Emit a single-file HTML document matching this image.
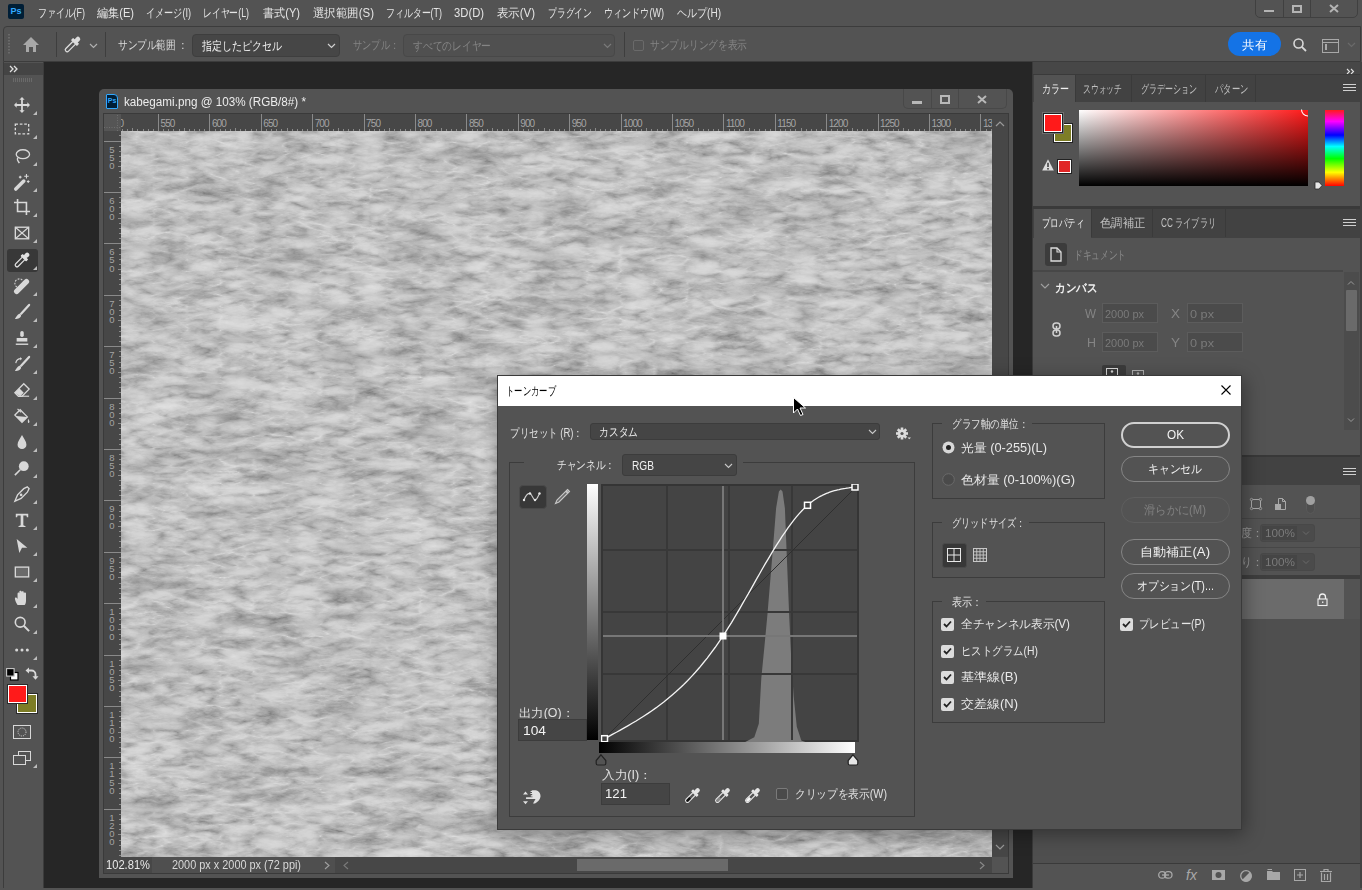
<!DOCTYPE html>
<html><head><meta charset="utf-8">
<style>
*{margin:0;padding:0;box-sizing:border-box}
html,body{width:1362px;height:890px;overflow:hidden;background:#282828;font-family:"Liberation Sans",sans-serif;font-size:12px;color:#dcdcdc}
.a{position:absolute}
.t{position:absolute;white-space:nowrap;line-height:16px;height:16px;transform-origin:0 50%}
svg{position:absolute;overflow:visible}
</style></head><body>
<div class="a" style="left:0px;top:0px;width:1362px;height:62px;background:#535353"></div>
<div class="a" style="left:8px;top:4px;width:16px;height:15px;background:#001e36;border-radius:2px;color:#31a8ff;font:bold 9px/15px 'Liberation Sans',sans-serif;text-align:center">Ps</div>
<div class="t" style="left:38px;top:4.5px;font-size:12px;color:#e4e4e4;--w:47;">ファイル(F)</div>
<div class="t" style="left:97px;top:4.5px;font-size:12px;color:#e4e4e4;--w:37;">編集(E)</div>
<div class="t" style="left:146px;top:4.5px;font-size:12px;color:#e4e4e4;--w:45;">イメージ(I)</div>
<div class="t" style="left:203px;top:4.5px;font-size:12px;color:#e4e4e4;--w:46;">レイヤー(L)</div>
<div class="t" style="left:263px;top:4.5px;font-size:12px;color:#e4e4e4;--w:37;">書式(Y)</div>
<div class="t" style="left:313px;top:4.5px;font-size:12px;color:#e4e4e4;--w:61;">選択範囲(S)</div>
<div class="t" style="left:386px;top:4.5px;font-size:12px;color:#e4e4e4;--w:56;">フィルター(T)</div>
<div class="t" style="left:454px;top:4.5px;font-size:12px;color:#e4e4e4;--w:30;">3D(D)</div>
<div class="t" style="left:497px;top:4.5px;font-size:12px;color:#e4e4e4;--w:38;">表示(V)</div>
<div class="t" style="left:548px;top:4.5px;font-size:12px;color:#e4e4e4;--w:44;">プラグイン</div>
<div class="t" style="left:604px;top:4.5px;font-size:12px;color:#e4e4e4;--w:60;">ウィンドウ(W)</div>
<div class="t" style="left:677px;top:4.5px;font-size:12px;color:#e4e4e4;--w:44;">ヘルプ(H)</div>
<div class="a" style="left:1255px;top:-1px;width:103px;height:19px;border:1px solid #404040;border-radius:0 0 5px 5px"></div>
<div class="a" style="left:1283px;top:0px;width:1px;height:17px;background:#404040"></div>
<div class="a" style="left:1310px;top:0px;width:1px;height:17px;background:#404040"></div>
<div class="a" style="left:1264px;top:10px;width:10px;height:2px;background:#b4b4b4"></div>
<div class="a" style="left:1292px;top:5px;width:10px;height:8px;border:2px solid #b4b4b4"></div>
<svg style="left:1329px;top:4px;" width="10" height="9" viewBox="0 0 10 9"><path d="M1 1L9 8M9 1L1 8" stroke="#b4b4b4" stroke-width="2"/></svg>
<div class="a" style="left:3px;top:26px;width:1358px;height:36px;background:#535353;border:1px solid #3c3c3c;border-radius:4px 0 0 0"></div>
<svg style="left:8px;top:34px;" width="3" height="20" viewBox="0 0 3 20"><rect x="0" y="0" width="2" height="1.5" fill="#6a6a6a"/><rect x="0" y="3" width="2" height="1.5" fill="#6a6a6a"/><rect x="0" y="6" width="2" height="1.5" fill="#6a6a6a"/><rect x="0" y="9" width="2" height="1.5" fill="#6a6a6a"/><rect x="0" y="12" width="2" height="1.5" fill="#6a6a6a"/><rect x="0" y="15" width="2" height="1.5" fill="#6a6a6a"/><rect x="0" y="18" width="2" height="1.5" fill="#6a6a6a"/></svg>
<svg style="left:23px;top:37px;" width="16" height="16" viewBox="0 0 16 16"><path d="M8 0L16 8H13V15H10V10H6V15H3V8H0Z" fill="#a8a8a8"/></svg>
<div class="a" style="left:56px;top:32px;width:1px;height:25px;background:#3e3e3e"></div>
<svg style="left:64px;top:36px;" width="17" height="17" viewBox="0 0 17 17"><g transform="translate(8.5 8.5) rotate(45) scale(1.0) translate(0 -10)"><rect x="-2.3" y="0" width="4.6" height="6" rx="2.3" fill="#dcdcdc"/><rect x="-3.8" y="5" width="7.6" height="2.6" rx="0.8" fill="#dcdcdc"/><path d="M-1.9 7.6V17.5A1.9 1.9 0 0 0 1.9 17.5V7.6" stroke="#dcdcdc" stroke-width="1.3" fill="#535353"/><rect x="-4.2" y="5" width="8.4" height="3" rx="0.8" fill="#dcdcdc"/></g></svg>
<svg style="left:89px;top:43px;" width="9" height="6" viewBox="0 0 9 6"><path d="M1 1L4.5 4.5L8 1" stroke="#b0b0b0" fill="none" stroke-width="1.2"/></svg>
<div class="a" style="left:105px;top:32px;width:1px;height:25px;background:#3e3e3e"></div>
<div class="t" style="left:118px;top:37px;font-size:12px;color:#dcdcdc;--w:70;">サンプル範囲 ：</div>
<div class="a" style="left:192px;top:34px;width:148px;height:23px;background:#464646;border:1px solid #3e3e3e;border-radius:4px"></div>
<div class="t" style="left:202px;top:37.5px;font-size:12px;color:#f0f0f0;--w:80;">指定したピクセル</div>
<svg style="left:327px;top:43px;" width="9" height="6" viewBox="0 0 9 6"><path d="M1 1L4.5 4.5L8 1" stroke="#d0d0d0" fill="none" stroke-width="1.2"/></svg>
<div class="t" style="left:353px;top:37px;font-size:12px;color:#858585;--w:46;">サンプル：</div>
<div class="a" style="left:403px;top:34px;width:212px;height:23px;background:#505050;border:1px solid #484848;border-radius:4px"></div>
<div class="t" style="left:413px;top:37.5px;font-size:12px;color:#858585;--w:78;">すべてのレイヤー</div>
<svg style="left:603px;top:43px;" width="9" height="6" viewBox="0 0 9 6"><path d="M1 1L4.5 4.5L8 1" stroke="#7a7a7a" fill="none" stroke-width="1.2"/></svg>
<div class="a" style="left:624px;top:32px;width:1px;height:25px;background:#3e3e3e"></div>
<div class="a" style="left:633px;top:40px;width:11px;height:11px;border:1px solid #6a6a6a;border-radius:2px"></div>
<div class="t" style="left:650px;top:37px;font-size:12px;color:#858585;--w:97;">サンプルリングを表示</div>
<div class="a" style="left:1228px;top:32px;width:53px;height:24px;background:#1473e6;border-radius:12px"></div>
<div class="t" style="left:1242px;top:36.5px;font-size:12px;color:#ffffff;--w:25;">共有</div>
<svg style="left:1293px;top:38px;" width="14" height="14" viewBox="0 0 14 14"><circle cx="5.5" cy="5.5" r="4.5" stroke="#d8d8d8" stroke-width="1.6" fill="none"/><path d="M8.8 8.8L13 13" stroke="#d8d8d8" stroke-width="1.8"/></svg>
<svg style="left:1322px;top:39px;" width="17" height="14" viewBox="0 0 17 14"><rect x="0.5" y="0.5" width="16" height="13" stroke="#a8a8a8" fill="none"/><path d="M0.5 3.5H16.5" stroke="#a8a8a8"/><rect x="3" y="5" width="2" height="6" fill="#a8a8a8"/></svg>
<svg style="left:1347px;top:42px;" width="9" height="6" viewBox="0 0 9 6"><path d="M1 1L4.5 4.5L8 1" stroke="#6a6a6a" fill="none" stroke-width="1.2"/></svg>
<div class="a" style="left:0px;top:62px;width:3px;height:828px;background:#535353"></div>
<div class="a" style="left:3px;top:62px;width:41px;height:828px;background:#535353;border-left:1px solid #3c3c3c;border-right:1px solid #3c3c3c"></div>
<div class="a" style="left:4px;top:63px;width:39px;height:12px;background:#444444"></div>
<svg style="left:9px;top:65px;" width="10" height="8" viewBox="0 0 10 8"><path d="M1 1L4 4L1 7M5 1L8 4L5 7" stroke="#e0e0e0" fill="none" stroke-width="1.3"/></svg>
<svg style="left:13px;top:78px;" width="20" height="5" viewBox="0 0 20 5"><rect x="0" y="0" width="1" height="4" fill="#6a6a6a"/><rect x="2" y="0" width="1" height="4" fill="#6a6a6a"/><rect x="4" y="0" width="1" height="4" fill="#6a6a6a"/><rect x="6" y="0" width="1" height="4" fill="#6a6a6a"/><rect x="8" y="0" width="1" height="4" fill="#6a6a6a"/><rect x="10" y="0" width="1" height="4" fill="#6a6a6a"/><rect x="12" y="0" width="1" height="4" fill="#6a6a6a"/><rect x="14" y="0" width="1" height="4" fill="#6a6a6a"/><rect x="16" y="0" width="1" height="4" fill="#6a6a6a"/><rect x="18" y="0" width="1" height="4" fill="#6a6a6a"/></svg>
<svg style="left:13.5px;top:97px" width="16" height="16" viewBox="0 0 18 18"><path d="M9 0L12 3H10V8H15V6L18 9L15 12V10H10V15H12L9 18L6 15H8V10H3V12L0 9L3 6V8H8V3H6Z" fill="#d8d8d8"/></svg>
<svg style="left:33px;top:111px;" width="4" height="4" viewBox="0 0 4 4"><path d="M4 0V4H0Z" fill="#bdbdbd"/></svg>
<svg style="left:13.5px;top:121px" width="16" height="16" viewBox="0 0 18 18"><rect x="1.5" y="3.5" width="15" height="11" stroke="#d8d8d8" stroke-width="1.5" stroke-dasharray="3 2" fill="none"/></svg>
<svg style="left:33px;top:135px;" width="4" height="4" viewBox="0 0 4 4"><path d="M4 0V4H0Z" fill="#bdbdbd"/></svg>
<svg style="left:13.5px;top:148px" width="16" height="16" viewBox="0 0 18 18"><ellipse cx="10" cy="7" rx="7.5" ry="5" stroke="#d8d8d8" stroke-width="1.5" fill="none"/><path d="M4 11C3 14 5 15 6 17" stroke="#d8d8d8" stroke-width="1.5" fill="none"/></svg>
<svg style="left:33px;top:162px;" width="4" height="4" viewBox="0 0 4 4"><path d="M4 0V4H0Z" fill="#bdbdbd"/></svg>
<svg style="left:13.5px;top:174px" width="16" height="16" viewBox="0 0 18 18"><path d="M2 17L11 8" stroke="#d8d8d8" stroke-width="4" stroke-linecap="round"/><path d="M14 0V5M11.5 2.5H16.5M7 2V5M5.5 3.5H8.5M16 7V10M14.5 8.5H17.5" stroke="#d8d8d8" stroke-width="1.2"/></svg>
<svg style="left:33px;top:188px;" width="4" height="4" viewBox="0 0 4 4"><path d="M4 0V4H0Z" fill="#bdbdbd"/></svg>
<svg style="left:13.5px;top:199px" width="16" height="16" viewBox="0 0 18 18"><path d="M4 0V14H18M0 4H14V18" stroke="#d8d8d8" stroke-width="1.8" fill="none"/></svg>
<svg style="left:33px;top:213px;" width="4" height="4" viewBox="0 0 4 4"><path d="M4 0V4H0Z" fill="#bdbdbd"/></svg>
<svg style="left:13.5px;top:225px" width="16" height="16" viewBox="0 0 18 18"><rect x="1.5" y="2.5" width="15" height="13" stroke="#d8d8d8" stroke-width="1.5" fill="none"/><path d="M1.5 2.5L16.5 15.5M16.5 2.5L1.5 15.5" stroke="#d8d8d8" stroke-width="1.3"/></svg>
<svg style="left:33px;top:239px;" width="4" height="4" viewBox="0 0 4 4"><path d="M4 0V4H0Z" fill="#bdbdbd"/></svg>
<div class="a" style="left:7px;top:249px;width:31px;height:23px;background:#383838;border-radius:3px"></div>
<svg style="left:13.5px;top:252px" width="16" height="16" viewBox="0 0 18 18"><g transform="scale(1.06)"><g transform="translate(8.5 8.5) rotate(45) scale(1.0) translate(0 -10)"><rect x="-2.3" y="0" width="4.6" height="6" rx="2.3" fill="#e0e0e0"/><rect x="-3.8" y="5" width="7.6" height="2.6" rx="0.8" fill="#e0e0e0"/><path d="M-1.9 7.6V17.5A1.9 1.9 0 0 0 1.9 17.5V7.6" stroke="#e0e0e0" stroke-width="1.3" fill="#383838"/><rect x="-4.2" y="5" width="8.4" height="3" rx="0.8" fill="#e0e0e0"/></g></g></svg>
<svg style="left:33px;top:266px;" width="4" height="4" viewBox="0 0 4 4"><path d="M4 0V4H0Z" fill="#bdbdbd"/></svg>
<svg style="left:13.5px;top:278px" width="16" height="16" viewBox="0 0 18 18"><path d="M3 15L14 4" stroke="#d8d8d8" stroke-width="6" stroke-linecap="round"/><circle cx="6" cy="6" r="5" stroke="#d8d8d8" stroke-width="1.2" stroke-dasharray="2 1.5" fill="none"/></svg>
<svg style="left:33px;top:292px;" width="4" height="4" viewBox="0 0 4 4"><path d="M4 0V4H0Z" fill="#bdbdbd"/></svg>
<svg style="left:13.5px;top:304px" width="16" height="16" viewBox="0 0 18 18"><path d="M17 1L8 11" stroke="#d8d8d8" stroke-width="2.5" stroke-linecap="round"/><path d="M7 11C4 11 3 14 1 17C5 17 8 15 8 13Z" fill="#d8d8d8"/></svg>
<svg style="left:33px;top:318px;" width="4" height="4" viewBox="0 0 4 4"><path d="M4 0V4H0Z" fill="#bdbdbd"/></svg>
<svg style="left:13.5px;top:330px" width="16" height="16" viewBox="0 0 18 18"><rect x="7" y="1" width="4" height="7" rx="2" fill="#d8d8d8"/><path d="M3 9H15V13H3Z" fill="#d8d8d8"/><path d="M2 16H16" stroke="#d8d8d8" stroke-width="1.6"/></svg>
<svg style="left:33px;top:344px;" width="4" height="4" viewBox="0 0 4 4"><path d="M4 0V4H0Z" fill="#bdbdbd"/></svg>
<svg style="left:13.5px;top:356px" width="16" height="16" viewBox="0 0 18 18"><path d="M17 1L8 11" stroke="#d8d8d8" stroke-width="2.5" stroke-linecap="round"/><path d="M7 11C4 11 3 14 1 17C5 17 8 15 8 13Z" fill="#d8d8d8"/><path d="M2 8A6 6 0 0 1 8 3" stroke="#d8d8d8" stroke-width="1.3" fill="none"/><path d="M7 1L9 3L7 5" fill="#d8d8d8"/></svg>
<svg style="left:33px;top:370px;" width="4" height="4" viewBox="0 0 4 4"><path d="M4 0V4H0Z" fill="#bdbdbd"/></svg>
<svg style="left:13.5px;top:382px" width="16" height="16" viewBox="0 0 18 18"><path d="M11 2L17 8L9 16H5L1 12Z" fill="none" stroke="#d8d8d8" stroke-width="1.5"/><path d="M1 12L6 7L11 12L7 16" fill="#d8d8d8"/><path d="M9 16H17" stroke="#d8d8d8" stroke-width="1.3"/></svg>
<svg style="left:33px;top:396px;" width="4" height="4" viewBox="0 0 4 4"><path d="M4 0V4H0Z" fill="#bdbdbd"/></svg>
<svg style="left:13.5px;top:408px" width="16" height="16" viewBox="0 0 18 18"><path d="M7 2L15 10L9 16L1 8Z" stroke="#d8d8d8" stroke-width="1.5" fill="none"/><path d="M2 9L15 10L9 16Z" fill="#d8d8d8"/><path d="M16 12C17 14 18 15 17 16.5C16 17.5 15 16 16 12Z" fill="#d8d8d8"/><path d="M4 1L8 5" stroke="#d8d8d8" stroke-width="1.3"/></svg>
<svg style="left:33px;top:422px;" width="4" height="4" viewBox="0 0 4 4"><path d="M4 0V4H0Z" fill="#bdbdbd"/></svg>
<svg style="left:13.5px;top:434px" width="16" height="16" viewBox="0 0 18 18"><path d="M9 1C11 5 14 8 14 12A5 5 0 0 1 4 12C4 8 7 5 9 1Z" fill="#d8d8d8"/></svg>
<svg style="left:33px;top:448px;" width="4" height="4" viewBox="0 0 4 4"><path d="M4 0V4H0Z" fill="#bdbdbd"/></svg>
<svg style="left:13.5px;top:460px" width="16" height="16" viewBox="0 0 18 18"><circle cx="11" cy="7" r="5.5" fill="#d8d8d8"/><path d="M7 11L1 17" stroke="#d8d8d8" stroke-width="1.8"/></svg>
<svg style="left:33px;top:474px;" width="4" height="4" viewBox="0 0 4 4"><path d="M4 0V4H0Z" fill="#bdbdbd"/></svg>
<svg style="left:13.5px;top:486px" width="16" height="16" viewBox="0 0 18 18"><path d="M15 1L17 3L15 7L8 14L1 17L4 10L11 3Z" stroke="#d8d8d8" stroke-width="1.5" fill="none"/><circle cx="8" cy="10" r="1.5" fill="#d8d8d8"/></svg>
<svg style="left:33px;top:500px;" width="4" height="4" viewBox="0 0 4 4"><path d="M4 0V4H0Z" fill="#bdbdbd"/></svg>
<svg style="left:13.5px;top:512px" width="16" height="16" viewBox="0 0 18 18"><path d="M2 2H16V6H14.5L14 4H10.5V15L13 16V17H5V16L7.5 15V4H4L3.5 6H2Z" fill="#d8d8d8"/></svg>
<svg style="left:33px;top:526px;" width="4" height="4" viewBox="0 0 4 4"><path d="M4 0V4H0Z" fill="#bdbdbd"/></svg>
<svg style="left:13.5px;top:538px" width="16" height="16" viewBox="0 0 18 18"><path d="M3 1L15 11H9L6 17Z" fill="#d8d8d8"/></svg>
<svg style="left:33px;top:552px;" width="4" height="4" viewBox="0 0 4 4"><path d="M4 0V4H0Z" fill="#bdbdbd"/></svg>
<svg style="left:13.5px;top:564px" width="16" height="16" viewBox="0 0 18 18"><rect x="1.5" y="3.5" width="15" height="11" stroke="#d8d8d8" stroke-width="1.5" fill="#6a6a6a"/></svg>
<svg style="left:33px;top:578px;" width="4" height="4" viewBox="0 0 4 4"><path d="M4 0V4H0Z" fill="#bdbdbd"/></svg>
<svg style="left:13.5px;top:590px" width="16" height="16" viewBox="0 0 18 18"><path d="M4 17C2 14 1 11 1 9C1 8 3 8 4 10V4C4 2.5 6 2.5 6 4V8V2C6 0.5 8.5 0.5 8.5 2V8V2.5C8.5 1 11 1 11 2.5V8V4C11 2.5 13.5 2.5 13.5 4V12C13.5 14 13 16 12 17Z" fill="#d8d8d8"/></svg>
<svg style="left:33px;top:604px;" width="4" height="4" viewBox="0 0 4 4"><path d="M4 0V4H0Z" fill="#bdbdbd"/></svg>
<svg style="left:13.5px;top:616px" width="16" height="16" viewBox="0 0 18 18"><circle cx="7" cy="7" r="5.5" stroke="#d8d8d8" stroke-width="1.8" fill="none"/><path d="M11 11L17 17" stroke="#d8d8d8" stroke-width="2.2"/></svg>
<svg style="left:33px;top:630px;" width="4" height="4" viewBox="0 0 4 4"><path d="M4 0V4H0Z" fill="#bdbdbd"/></svg>
<svg style="left:13.5px;top:642px" width="16" height="16" viewBox="0 0 18 18"><circle cx="3" cy="9" r="1.7" fill="#d8d8d8"/><circle cx="9" cy="9" r="1.7" fill="#d8d8d8"/><circle cx="15" cy="9" r="1.7" fill="#d8d8d8"/></svg>
<svg style="left:33px;top:656px;" width="4" height="4" viewBox="0 0 4 4"><path d="M4 0V4H0Z" fill="#bdbdbd"/></svg>
<svg style="left:6px;top:668px;" width="13" height="13" viewBox="0 0 13 13"><rect x="4.5" y="4.5" width="7.5" height="7.5" fill="#fff" stroke="#000" stroke-width="1.2"/><rect x="2.5" y="6.5" width="1" height="1" fill="#fff"/><rect x="0.6" y="0.6" width="7.5" height="7.5" fill="#000" stroke="#c8c8c8" stroke-width="1.1"/></svg>
<svg style="left:25px;top:667px;" width="13" height="13" viewBox="0 0 13 13"><path d="M3 3.5H6.5A4 4 0 0 1 10.5 7.5V10" stroke="#d8d8d8" stroke-width="1.8" fill="none"/><path d="M0.5 3.5L4 0.5V6.5Z M10.5 12.8L7.5 9.3H13.5Z" fill="#d8d8d8"/></svg>
<div class="a" style="left:17px;top:694px;width:20px;height:19px;background:#7d7d26;border:1.5px solid #fff;outline:1px solid #2a2a2a"></div>
<div class="a" style="left:8px;top:685px;width:19px;height:18px;background:#ff1a1a;border:1.5px solid #fff;outline:1px solid #2a2a2a"></div>
<svg style="left:13px;top:725px;" width="18" height="14" viewBox="0 0 18 14"><rect x="0.5" y="0.5" width="17" height="13" stroke="#d8d8d8" fill="none"/><circle cx="9" cy="7" r="4" stroke="#d8d8d8" stroke-dasharray="1 1" fill="none"/></svg>
<svg style="left:13px;top:751px;" width="18" height="15" viewBox="0 0 18 15"><rect x="5.5" y="0.5" width="12" height="9" stroke="#d8d8d8" fill="#535353"/><rect x="0.5" y="4.5" width="12" height="9" stroke="#d8d8d8" fill="#535353"/></svg>
<svg style="left:33px;top:764px;" width="4" height="4" viewBox="0 0 4 4"><path d="M4 0V4H0Z" fill="#bdbdbd"/></svg>
<div class="a" style="left:44px;top:62px;width:989px;height:826px;background:#262626"></div>
<div class="a" style="left:0px;top:888px;width:1362px;height:2px;background:#535353"></div>
<div class="a" style="left:99px;top:89px;width:914px;height:789px;background:#535353;border-radius:5px 5px 0 0"></div>
<div class="a" style="left:106px;top:94px;width:12px;height:15px;background:#001e36;border:1.5px solid #31a8ff;border-radius:1px 4px 1px 1px;color:#31a8ff;font:bold 7px/12px 'Liberation Sans',sans-serif;text-align:center">Ps</div>
<div class="t" style="left:124px;top:94px;font-size:12px;color:#ececec;--w:182;">kabegami.png @ 103% (RGB/8#) *</div>
<div class="a" style="left:903px;top:89px;width:104px;height:20px;border:1px solid #484848;border-top:none;border-radius:0 0 5px 5px"></div>
<div class="a" style="left:931px;top:89px;width:1px;height:19px;background:#484848"></div>
<div class="a" style="left:958px;top:89px;width:1px;height:19px;background:#484848"></div>
<div class="a" style="left:912px;top:101px;width:10px;height:3px;background:#b8b8b8"></div>
<div class="a" style="left:940px;top:95px;width:10px;height:9px;border:2px solid #b8b8b8"></div>
<svg style="left:977px;top:95px;" width="10" height="9" viewBox="0 0 10 9"><path d="M1 1L9 8M9 1L1 8" stroke="#b8b8b8" stroke-width="2"/></svg>
<div class="a" style="left:103px;top:113px;width:906px;height:761px;background:#474747;border:1px solid #3a3a3a"></div>
<div class="a" style="left:104px;top:114px;width:17px;height:17px;background:#555555"></div>
<svg style="left:104px;top:114px;" width="17" height="17" viewBox="0 0 17 17"><path d="M13.5 1V17" stroke="#6e6e6e" stroke-dasharray="1 1.5"/><path d="M0 13.5H17" stroke="#6e6e6e" stroke-dasharray="1 1.5"/></svg>
<svg style="left:0px;top:0px;clip-path:inset(114px 370px 759px 121px)" width="1362" height="890" viewBox="0 0 1362 890"><path d="M122.5 129V131 M127.7 129V131 M132.8 128V131 M137.9 129V131 M143.1 129V131 M148.2 129V131 M153.4 129V131 M158.5 114V131 M163.6 129V131 M168.8 129V131 M173.9 129V131 M179.1 129V131 M184.2 128V131 M189.3 129V131 M194.5 129V131 M199.6 129V131 M204.8 129V131 M209.9 114V131 M215.0 129V131 M220.2 129V131 M225.3 129V131 M230.5 129V131 M235.6 128V131 M240.7 129V131 M245.9 129V131 M251.0 129V131 M256.2 129V131 M261.3 114V131 M266.4 129V131 M271.6 129V131 M276.7 129V131 M281.9 129V131 M287.0 128V131 M292.1 129V131 M297.3 129V131 M302.4 129V131 M307.6 129V131 M312.7 114V131 M317.8 129V131 M323.0 129V131 M328.1 129V131 M333.3 129V131 M338.4 128V131 M343.5 129V131 M348.7 129V131 M353.8 129V131 M359.0 129V131 M364.1 114V131 M369.2 129V131 M374.4 129V131 M379.5 129V131 M384.7 129V131 M389.8 128V131 M394.9 129V131 M400.1 129V131 M405.2 129V131 M410.4 129V131 M415.5 114V131 M420.6 129V131 M425.8 129V131 M430.9 129V131 M436.1 129V131 M441.2 128V131 M446.3 129V131 M451.5 129V131 M456.6 129V131 M461.8 129V131 M466.9 114V131 M472.0 129V131 M477.2 129V131 M482.3 129V131 M487.5 129V131 M492.6 128V131 M497.7 129V131 M502.9 129V131 M508.0 129V131 M513.2 129V131 M518.3 114V131 M523.4 129V131 M528.6 129V131 M533.7 129V131 M538.9 129V131 M544.0 128V131 M549.1 129V131 M554.3 129V131 M559.4 129V131 M564.6 129V131 M569.7 114V131 M574.8 129V131 M580.0 129V131 M585.1 129V131 M590.3 129V131 M595.4 128V131 M600.5 129V131 M605.7 129V131 M610.8 129V131 M616.0 129V131 M621.1 114V131 M626.2 129V131 M631.4 129V131 M636.5 129V131 M641.7 129V131 M646.8 128V131 M651.9 129V131 M657.1 129V131 M662.2 129V131 M667.4 129V131 M672.5 114V131 M677.6 129V131 M682.8 129V131 M687.9 129V131 M693.1 129V131 M698.2 128V131 M703.3 129V131 M708.5 129V131 M713.6 129V131 M718.8 129V131 M723.9 114V131 M729.0 129V131 M734.2 129V131 M739.3 129V131 M744.5 129V131 M749.6 128V131 M754.7 129V131 M759.9 129V131 M765.0 129V131 M770.2 129V131 M775.3 114V131 M780.4 129V131 M785.6 129V131 M790.7 129V131 M795.9 129V131 M801.0 128V131 M806.1 129V131 M811.3 129V131 M816.4 129V131 M821.6 129V131 M826.7 114V131 M831.8 129V131 M837.0 129V131 M842.1 129V131 M847.3 129V131 M852.4 128V131 M857.5 129V131 M862.7 129V131 M867.8 129V131 M873.0 129V131 M878.1 114V131 M883.2 129V131 M888.4 129V131 M893.5 129V131 M898.7 129V131 M903.8 128V131 M908.9 129V131 M914.1 129V131 M919.2 129V131 M924.4 129V131 M929.5 114V131 M934.6 129V131 M939.8 129V131 M944.9 129V131 M950.1 129V131 M955.2 128V131 M960.3 129V131 M965.5 129V131 M970.6 129V131 M975.8 129V131 M980.9 114V131 M986.0 129V131 M991.2 129V131" stroke="#8a8a8a" stroke-width="1" shape-rendering="crispEdges"/></svg>
<div class="a" style="left:121px;top:114px;width:871px;height:17px;overflow:hidden">
<div class="t" style="left:-11.9px;top:3px;font-size:10px;letter-spacing:-0.9px;color:#a4a4a4;line-height:13px">500</div>
<div class="t" style="left:39.5px;top:3px;font-size:10px;letter-spacing:-0.9px;color:#a4a4a4;line-height:13px">550</div>
<div class="t" style="left:90.9px;top:3px;font-size:10px;letter-spacing:-0.9px;color:#a4a4a4;line-height:13px">600</div>
<div class="t" style="left:142.3px;top:3px;font-size:10px;letter-spacing:-0.9px;color:#a4a4a4;line-height:13px">650</div>
<div class="t" style="left:193.7px;top:3px;font-size:10px;letter-spacing:-0.9px;color:#a4a4a4;line-height:13px">700</div>
<div class="t" style="left:245.1px;top:3px;font-size:10px;letter-spacing:-0.9px;color:#a4a4a4;line-height:13px">750</div>
<div class="t" style="left:296.5px;top:3px;font-size:10px;letter-spacing:-0.9px;color:#a4a4a4;line-height:13px">800</div>
<div class="t" style="left:347.9px;top:3px;font-size:10px;letter-spacing:-0.9px;color:#a4a4a4;line-height:13px">850</div>
<div class="t" style="left:399.3px;top:3px;font-size:10px;letter-spacing:-0.9px;color:#a4a4a4;line-height:13px">900</div>
<div class="t" style="left:450.7px;top:3px;font-size:10px;letter-spacing:-0.9px;color:#a4a4a4;line-height:13px">950</div>
<div class="t" style="left:502.1px;top:3px;font-size:10px;letter-spacing:-0.9px;color:#a4a4a4;line-height:13px">1000</div>
<div class="t" style="left:553.5px;top:3px;font-size:10px;letter-spacing:-0.9px;color:#a4a4a4;line-height:13px">1050</div>
<div class="t" style="left:604.9px;top:3px;font-size:10px;letter-spacing:-0.9px;color:#a4a4a4;line-height:13px">1100</div>
<div class="t" style="left:656.3px;top:3px;font-size:10px;letter-spacing:-0.9px;color:#a4a4a4;line-height:13px">1150</div>
<div class="t" style="left:707.7px;top:3px;font-size:10px;letter-spacing:-0.9px;color:#a4a4a4;line-height:13px">1200</div>
<div class="t" style="left:759.1px;top:3px;font-size:10px;letter-spacing:-0.9px;color:#a4a4a4;line-height:13px">1250</div>
<div class="t" style="left:810.5px;top:3px;font-size:10px;letter-spacing:-0.9px;color:#a4a4a4;line-height:13px">1300</div>
<div class="t" style="left:861.9px;top:3px;font-size:10px;letter-spacing:-0.9px;color:#a4a4a4;line-height:13px">1350</div>
</div>
<svg style="left:0px;top:0px;clip-path:inset(131px 1241px 33px 104px)" width="1362" height="890" viewBox="0 0 1362 890"><path d="M119 135.9H121 M104 141.0H121 M119 146.1H121 M119 151.3H121 M119 156.4H121 M119 161.6H121 M118 166.7H121 M119 171.8H121 M119 177.0H121 M119 182.1H121 M119 187.3H121 M104 192.4H121 M119 197.5H121 M119 202.7H121 M119 207.8H121 M119 213.0H121 M118 218.1H121 M119 223.2H121 M119 228.4H121 M119 233.5H121 M119 238.7H121 M104 243.8H121 M119 248.9H121 M119 254.1H121 M119 259.2H121 M119 264.4H121 M118 269.5H121 M119 274.6H121 M119 279.8H121 M119 284.9H121 M119 290.1H121 M104 295.2H121 M119 300.3H121 M119 305.5H121 M119 310.6H121 M119 315.8H121 M118 320.9H121 M119 326.0H121 M119 331.2H121 M119 336.3H121 M119 341.5H121 M104 346.6H121 M119 351.7H121 M119 356.9H121 M119 362.0H121 M119 367.2H121 M118 372.3H121 M119 377.4H121 M119 382.6H121 M119 387.7H121 M119 392.9H121 M104 398.0H121 M119 403.1H121 M119 408.3H121 M119 413.4H121 M119 418.6H121 M118 423.7H121 M119 428.8H121 M119 434.0H121 M119 439.1H121 M119 444.3H121 M104 449.4H121 M119 454.5H121 M119 459.7H121 M119 464.8H121 M119 470.0H121 M118 475.1H121 M119 480.2H121 M119 485.4H121 M119 490.5H121 M119 495.7H121 M104 500.8H121 M119 505.9H121 M119 511.1H121 M119 516.2H121 M119 521.4H121 M118 526.5H121 M119 531.6H121 M119 536.8H121 M119 541.9H121 M119 547.1H121 M104 552.2H121 M119 557.3H121 M119 562.5H121 M119 567.6H121 M119 572.8H121 M118 577.9H121 M119 583.0H121 M119 588.2H121 M119 593.3H121 M119 598.5H121 M104 603.6H121 M119 608.7H121 M119 613.9H121 M119 619.0H121 M119 624.2H121 M118 629.3H121 M119 634.4H121 M119 639.6H121 M119 644.7H121 M119 649.9H121 M104 655.0H121 M119 660.1H121 M119 665.3H121 M119 670.4H121 M119 675.6H121 M118 680.7H121 M119 685.8H121 M119 691.0H121 M119 696.1H121 M119 701.3H121 M104 706.4H121 M119 711.5H121 M119 716.7H121 M119 721.8H121 M119 727.0H121 M118 732.1H121 M119 737.2H121 M119 742.4H121 M119 747.5H121 M119 752.7H121 M104 757.8H121 M119 762.9H121 M119 768.1H121 M119 773.2H121 M119 778.4H121 M118 783.5H121 M119 788.6H121 M119 793.8H121 M119 798.9H121 M119 804.1H121 M104 809.2H121 M119 814.3H121 M119 819.5H121 M119 824.6H121 M119 829.8H121 M118 834.9H121 M119 840.0H121 M119 845.2H121 M119 850.3H121 M119 855.5H121" stroke="#8a8a8a" stroke-width="1" shape-rendering="crispEdges"/></svg>
<div class="a" style="left:104px;top:131px;width:17px;height:726px;overflow:hidden">
<div class="a" style="left:3px;top:14.5px;width:10px;font-size:9.5px;line-height:8.2px;color:#a4a4a4;text-align:center"><div style="height:8.2px">5</div><div style="height:8.2px">5</div><div style="height:8.2px">0</div></div>
<div class="a" style="left:3px;top:65.9px;width:10px;font-size:9.5px;line-height:8.2px;color:#a4a4a4;text-align:center"><div style="height:8.2px">6</div><div style="height:8.2px">0</div><div style="height:8.2px">0</div></div>
<div class="a" style="left:3px;top:117.3px;width:10px;font-size:9.5px;line-height:8.2px;color:#a4a4a4;text-align:center"><div style="height:8.2px">6</div><div style="height:8.2px">5</div><div style="height:8.2px">0</div></div>
<div class="a" style="left:3px;top:168.7px;width:10px;font-size:9.5px;line-height:8.2px;color:#a4a4a4;text-align:center"><div style="height:8.2px">7</div><div style="height:8.2px">0</div><div style="height:8.2px">0</div></div>
<div class="a" style="left:3px;top:220.1px;width:10px;font-size:9.5px;line-height:8.2px;color:#a4a4a4;text-align:center"><div style="height:8.2px">7</div><div style="height:8.2px">5</div><div style="height:8.2px">0</div></div>
<div class="a" style="left:3px;top:271.5px;width:10px;font-size:9.5px;line-height:8.2px;color:#a4a4a4;text-align:center"><div style="height:8.2px">8</div><div style="height:8.2px">0</div><div style="height:8.2px">0</div></div>
<div class="a" style="left:3px;top:322.9px;width:10px;font-size:9.5px;line-height:8.2px;color:#a4a4a4;text-align:center"><div style="height:8.2px">8</div><div style="height:8.2px">5</div><div style="height:8.2px">0</div></div>
<div class="a" style="left:3px;top:374.3px;width:10px;font-size:9.5px;line-height:8.2px;color:#a4a4a4;text-align:center"><div style="height:8.2px">9</div><div style="height:8.2px">0</div><div style="height:8.2px">0</div></div>
<div class="a" style="left:3px;top:425.7px;width:10px;font-size:9.5px;line-height:8.2px;color:#a4a4a4;text-align:center"><div style="height:8.2px">9</div><div style="height:8.2px">5</div><div style="height:8.2px">0</div></div>
<div class="a" style="left:3px;top:477.1px;width:10px;font-size:9.5px;line-height:8.2px;color:#a4a4a4;text-align:center"><div style="height:8.2px">1</div><div style="height:8.2px">0</div><div style="height:8.2px">0</div><div style="height:8.2px">0</div></div>
<div class="a" style="left:3px;top:528.5px;width:10px;font-size:9.5px;line-height:8.2px;color:#a4a4a4;text-align:center"><div style="height:8.2px">1</div><div style="height:8.2px">0</div><div style="height:8.2px">5</div><div style="height:8.2px">0</div></div>
<div class="a" style="left:3px;top:579.9px;width:10px;font-size:9.5px;line-height:8.2px;color:#a4a4a4;text-align:center"><div style="height:8.2px">1</div><div style="height:8.2px">1</div><div style="height:8.2px">0</div><div style="height:8.2px">0</div></div>
<div class="a" style="left:3px;top:631.3px;width:10px;font-size:9.5px;line-height:8.2px;color:#a4a4a4;text-align:center"><div style="height:8.2px">1</div><div style="height:8.2px">1</div><div style="height:8.2px">5</div><div style="height:8.2px">0</div></div>
<div class="a" style="left:3px;top:682.7px;width:10px;font-size:9.5px;line-height:8.2px;color:#a4a4a4;text-align:center"><div style="height:8.2px">1</div><div style="height:8.2px">2</div><div style="height:8.2px">0</div><div style="height:8.2px">0</div></div>
<div class="a" style="left:3px;top:734.1px;width:10px;font-size:9.5px;line-height:8.2px;color:#a4a4a4;text-align:center"><div style="height:8.2px">1</div><div style="height:8.2px">2</div><div style="height:8.2px">5</div><div style="height:8.2px">0</div></div>
</div>
<div class="a" style="left:121px;top:131px;width:871px;height:726px;background:#c8c8c8;overflow:hidden">
<svg width="871" height="726" style="left:0;top:0">
<filter id="tex" x="0" y="0" width="100%" height="100%" color-interpolation-filters="sRGB">
<feTurbulence type="fractalNoise" baseFrequency="0.015 0.06" numOctaves="3" seed="8" result="a"/>
<feTurbulence type="turbulence" baseFrequency="0.03 0.085" numOctaves="4" seed="13" result="b"/>
<feComposite in="a" in2="b" operator="arithmetic" k1="0" k2="0.4" k3="0.75" k4="0.12" result="c"/>
<feColorMatrix in="c" type="matrix" values="1 0 0 0 0  1 0 0 0 0  1 0 0 0 0  0 0 0 0 1"/>
<feComponentTransfer><feFuncR type="table" tableValues="0.2 0.42 0.6 0.73 0.82 0.87 0.91"/><feFuncG type="table" tableValues="0.2 0.42 0.6 0.73 0.82 0.87 0.91"/><feFuncB type="table" tableValues="0.2 0.42 0.6 0.73 0.82 0.87 0.91"/></feComponentTransfer>
</filter>
<rect width="871" height="726" filter="url(#tex)"/>
</svg></div>
<div class="a" style="left:992px;top:114px;width:16px;height:743px;background:#474747"></div>
<svg style="left:995px;top:121px;" width="10" height="6" viewBox="0 0 10 6"><path d="M1 5L5 1L9 5" stroke="#9a9a9a" fill="none" stroke-width="1.2"/></svg>
<svg style="left:995px;top:844px;" width="10" height="6" viewBox="0 0 10 6"><path d="M1 1L5 5L9 1" stroke="#9a9a9a" fill="none" stroke-width="1.2"/></svg>
<div class="a" style="left:104px;top:857px;width:888px;height:16px;background:#474747"></div>
<div class="a" style="left:992px;top:857px;width:16px;height:16px;background:#535353"></div>
<div class="t" style="left:106px;top:857px;font-size:12px;color:#e8e8e8;--w:44;">102.81%</div>
<div class="a" style="left:152px;top:857px;width:183px;height:16px;background:#4f4f4f"></div>
<div class="t" style="left:172px;top:857px;font-size:12px;color:#d8d8d8;--w:129;">2000 px x 2000 px (72 ppi)</div>
<svg style="left:324px;top:861px;" width="6" height="9" viewBox="0 0 6 9"><path d="M1 1L5 4.5L1 8" stroke="#a0a0a0" fill="none" stroke-width="1.1"/></svg>
<svg style="left:343px;top:861px;" width="6" height="9" viewBox="0 0 6 9"><path d="M5 1L1 4.5L5 8" stroke="#7a7a7a" fill="none" stroke-width="1.1"/></svg>
<div class="a" style="left:577px;top:859px;width:151px;height:12px;background:#6a6a6a"></div>
<svg style="left:979px;top:861px;" width="6" height="9" viewBox="0 0 6 9"><path d="M1 1L5 4.5L1 8" stroke="#8a8a8a" fill="none" stroke-width="1.1"/></svg>
<div class="a" style="left:1032px;top:62px;width:1px;height:826px;background:#3a3a3a"></div>
<div class="a" style="left:1033px;top:62px;width:329px;height:826px;background:#535353"></div>
<div class="a" style="left:1033px;top:62px;width:329px;height:12px;background:#474747"></div>
<svg style="left:1346px;top:68px;" width="9" height="7" viewBox="0 0 9 7"><path d="M1 1L3.5 3.5L1 6M5 1L7.5 3.5L5 6" stroke="#e0e0e0" fill="none" stroke-width="1.1"/></svg>
<div class="a" style="left:1033px;top:74px;width:329px;height:1px;background:#3a3a3a"></div>
<div class="a" style="left:1033px;top:75px;width:329px;height:27px;background:#424242"></div>
<div class="a" style="left:1034px;top:75px;width:41px;height:28px;background:#535353"></div>
<div class="a" style="left:1131px;top:75px;width:1px;height:27px;background:#3a3a3a"></div>
<div class="a" style="left:1205px;top:75px;width:1px;height:27px;background:#3a3a3a"></div>
<div class="a" style="left:1255px;top:75px;width:1px;height:27px;background:#3a3a3a"></div>
<div class="a" style="left:1075px;top:75px;width:1px;height:27px;background:#3a3a3a"></div>
<div class="t" style="left:1042px;top:80.5px;font-size:12px;color:#f0f0f0;--w:27;">カラー</div>
<div class="t" style="left:1083px;top:80.5px;font-size:12px;color:#c0c0c0;--w:39;">スウォッチ</div>
<div class="t" style="left:1141px;top:80.5px;font-size:12px;color:#c0c0c0;--w:56;">グラデーション</div>
<div class="t" style="left:1215px;top:80.5px;font-size:12px;color:#c0c0c0;--w:33;">パターン</div>
<svg style="left:1343px;top:84px;" width="13" height="9" viewBox="0 0 13 9"><path d="M0 0.5H13M0 3.5H13M0 6.5H13" stroke="#d0d0d0" stroke-width="1.2"/></svg>
<div class="a" style="left:1054px;top:124px;width:18px;height:18px;background:#7d7d26;border:1.5px solid #fff;box-shadow:0 0 0 1px #222"></div>
<div class="a" style="left:1042px;top:112px;width:22px;height:22px;border:1px solid #707070;background:#535353"></div>
<div class="a" style="left:1044px;top:114px;width:18px;height:18px;background:#ff1a1a;border:1.5px solid #fff;box-shadow:0 0 0 1px #222"></div>
<svg style="left:1042px;top:159px;" width="12" height="12" viewBox="0 0 12 12"><path d="M6 0.3L11.8 11.5H0.2Z" fill="#dcdcdc"/><rect x="5.1" y="3.8" width="1.8" height="4.2" fill="#535353"/><rect x="5.1" y="9" width="1.8" height="1.6" fill="#535353"/></svg>
<div class="a" style="left:1058px;top:160px;width:13px;height:13px;background:#e12626;border:1.5px solid #fff;box-shadow:0 0 0 1px #222"></div>
<div class="a" style="left:1079px;top:110px;width:229px;height:76px;background:linear-gradient(to bottom,rgba(0,0,0,0),#000),linear-gradient(to right,#fff,#ff1a1a)"></div>
<svg style="left:1300px;top:109px;" width="8" height="8" viewBox="0 0 8 8"><path d="M1.5 0.5A6.5 6.5 0 0 0 8 7" stroke="#fff" fill="none" stroke-width="1.1"/></svg>
<div class="a" style="left:1325px;top:110px;width:19px;height:76px;background:linear-gradient(to bottom,#ff1a1a 0%,#ff00ff 15%,#0000ff 33%,#00ffff 48%,#00ff00 64%,#ffff00 82%,#ff0000 100%)"></div>
<svg style="left:1314px;top:181px;" width="9" height="9" viewBox="0 0 9 9"><path d="M1 1H5L8 4.5L5 8H1Z" fill="#e8e8e8" stroke="#2a2a2a" stroke-width="0.8"/></svg>
<div class="a" style="left:1033px;top:206px;width:329px;height:3px;background:#3a3a3a"></div>
<div class="a" style="left:1033px;top:209px;width:329px;height:29px;background:#424242"></div>
<div class="a" style="left:1034px;top:209px;width:57px;height:29px;background:#535353"></div>
<div class="a" style="left:1091px;top:209px;width:1px;height:28px;background:#3a3a3a"></div>
<div class="a" style="left:1152px;top:209px;width:1px;height:28px;background:#3a3a3a"></div>
<div class="a" style="left:1225px;top:209px;width:1px;height:28px;background:#3a3a3a"></div>
<div class="t" style="left:1042px;top:215px;font-size:12px;color:#f0f0f0;--w:42;">プロパティ</div>
<div class="t" style="left:1100px;top:215px;font-size:12px;color:#c0c0c0;--w:45;">色調補正</div>
<div class="t" style="left:1161px;top:215px;font-size:12px;color:#c0c0c0;--w:55;">CC ライブラリ</div>
<svg style="left:1343px;top:219px;" width="13" height="9" viewBox="0 0 13 9"><path d="M0 0.5H13M0 3.5H13M0 6.5H13" stroke="#d0d0d0" stroke-width="1.2"/></svg>
<div class="a" style="left:1045px;top:243px;width:22px;height:23px;background:#3c3c3c;border-radius:3px"></div>
<svg style="left:1050px;top:247px;" width="12" height="15" viewBox="0 0 12 15"><path d="M1 1H7L11 5V14H1Z" stroke="#dcdcdc" stroke-width="1.3" fill="none"/><path d="M7 1V5H11" stroke="#dcdcdc" stroke-width="1.1" fill="none"/></svg>
<div class="t" style="left:1074px;top:247px;font-size:12px;color:#8a8a8a;--w:52;">ドキュメント</div>
<div class="a" style="left:1033px;top:270px;width:310px;height:2px;background:#474747"></div>
<svg style="left:1040px;top:283px;" width="10" height="6" viewBox="0 0 10 6"><path d="M1 1L5 5L9 1" stroke="#a0a0a0" fill="none" stroke-width="1.1"/></svg>
<div class="t" style="left:1055px;top:279.5px;font-size:12px;color:#f0f0f0;--w:42;font-weight:bold">カンバス</div>
<div class="t" style="left:1085px;top:306px;font-size:12px;color:#858585;--w:11;">W</div>
<div class="t" style="left:1087px;top:335px;font-size:12px;color:#858585;--w:9;">H</div>
<div class="t" style="left:1171px;top:306px;font-size:12px;color:#858585;--w:9;">X</div>
<div class="t" style="left:1171px;top:335px;font-size:12px;color:#858585;--w:9;">Y</div>
<div class="a" style="left:1102px;top:303px;width:56px;height:20px;background:#4b4b4b;border:1px solid #5c5c5c"></div>
<div class="t" style="left:1105px;top:305.5px;font-size:11px;color:#7a7a7a;--w:39;">2000 px</div>
<div class="a" style="left:1102px;top:332px;width:56px;height:20px;background:#4b4b4b;border:1px solid #5c5c5c"></div>
<div class="t" style="left:1105px;top:334.5px;font-size:11px;color:#7a7a7a;--w:39;">2000 px</div>
<div class="a" style="left:1187px;top:303px;width:56px;height:20px;background:#4b4b4b;border:1px solid #5c5c5c"></div>
<div class="t" style="left:1190px;top:305.5px;font-size:11px;color:#7a7a7a;--w:24;">0 px</div>
<div class="a" style="left:1187px;top:332px;width:56px;height:20px;background:#4b4b4b;border:1px solid #5c5c5c"></div>
<div class="t" style="left:1190px;top:334.5px;font-size:11px;color:#7a7a7a;--w:24;">0 px</div>
<svg style="left:1052px;top:322px;" width="9" height="15" viewBox="0 0 9 15"><rect x="1" y="1" width="7" height="6" rx="3" stroke="#d0d0d0" stroke-width="1.5" fill="none"/><rect x="1" y="8" width="7" height="6" rx="3" stroke="#d0d0d0" stroke-width="1.5" fill="none"/><path d="M4.5 4V11" stroke="#d0d0d0" stroke-width="1.5"/></svg>
<div class="a" style="left:1102px;top:365px;width:24px;height:12px;background:#3c3c3c;border-radius:2px"></div>
<svg style="left:1106px;top:368px;" width="12" height="9" viewBox="0 0 12 9"><rect x="0.5" y="0.5" width="11" height="10" stroke="#d8d8d8" fill="none"/><circle cx="6" cy="3.5" r="1.2" fill="#d8d8d8"/></svg>
<svg style="left:1132px;top:370px;" width="12" height="8" viewBox="0 0 12 8"><rect x="0.5" y="0.5" width="11" height="10" stroke="#b0b0b0" fill="none"/><circle cx="6" cy="3.5" r="1.2" fill="#b0b0b0"/></svg>
<div class="a" style="left:1344px;top:272px;width:15px;height:158px;background:#4c4c4c"></div>
<div class="a" style="left:1346px;top:290px;width:11px;height:41px;background:#6a6a6a;border-radius:1px"></div>
<svg style="left:1347px;top:280px;" width="8" height="5" viewBox="0 0 8 5"><path d="M1 4.5L4 1.5L7 4.5" stroke="#9a9a9a" fill="none" stroke-width="1"/></svg>
<svg style="left:1347px;top:418px;" width="8" height="5" viewBox="0 0 8 5"><path d="M1 0.5L4 3.5L7 0.5" stroke="#9a9a9a" fill="none" stroke-width="1"/></svg>
<div class="a" style="left:1033px;top:455px;width:329px;height:2px;background:#383838"></div>
<div class="a" style="left:1033px;top:457px;width:329px;height:28px;background:#424242"></div>
<svg style="left:1343px;top:468px;" width="13" height="9" viewBox="0 0 13 9"><path d="M0 0.5H13M0 3.5H13M0 6.5H13" stroke="#d0d0d0" stroke-width="1.2"/></svg>
<div class="a" style="left:1033px;top:485px;width:329px;height:33px;background:#535353"></div>
<svg style="left:1250px;top:498px;" width="12" height="12" viewBox="0 0 12 12"><rect x="1.5" y="1.5" width="9" height="9" stroke="#a8a8a8" stroke-width="1" fill="none"/><circle cx="1.5" cy="1.5" r="1.2" fill="#535353" stroke="#a8a8a8" stroke-width="0.8"/><circle cx="10.5" cy="1.5" r="1.2" fill="#535353" stroke="#a8a8a8" stroke-width="0.8"/><circle cx="1.5" cy="10.5" r="1.2" fill="#535353" stroke="#a8a8a8" stroke-width="0.8"/><circle cx="10.5" cy="10.5" r="1.2" fill="#535353" stroke="#a8a8a8" stroke-width="0.8"/></svg>
<svg style="left:1275px;top:498px;" width="11" height="12" viewBox="0 0 11 12"><path d="M3.5 0.5H7.5L10.5 3.5V11.5H3.5Z" stroke="#a8a8a8" fill="none"/><path d="M7.5 0.5V3.5H10.5" stroke="#a8a8a8" fill="none"/><rect x="0" y="6" width="6" height="6" fill="#a8a8a8"/></svg>
<div class="a" style="left:1306px;top:497px;width:9px;height:17px;background:#4e4e4e;border:1px solid #5a5a5a;border-radius:5px"></div>
<div class="a" style="left:1306px;top:496px;width:9px;height:9px;background:#a0a0a0;border-radius:5px"></div>
<div class="a" style="left:1033px;top:518px;width:329px;height:1px;background:#474747"></div>
<div class="a" style="left:1033px;top:519px;width:329px;height:28px;background:#535353"></div>
<div class="t" style="left:1241px;top:525px;font-size:12px;color:#9a9a9a;--w:22;">度：</div>
<div class="a" style="left:1260px;top:524px;width:55px;height:18px;background:#4b4b4b;border:1px solid #484848;border-radius:3px"></div>
<div class="a" style="left:1262px;top:526px;width:35px;height:14px;background:#454545"></div>
<div class="t" style="left:1265px;top:525px;font-size:11px;color:#7a7a7a;--w:30;">100%</div>
<svg style="left:1302px;top:531px;" width="8" height="5" viewBox="0 0 8 5"><path d="M1 0.5L4 3.5L7 0.5" stroke="#6a6a6a" fill="none" stroke-width="1"/></svg>
<div class="a" style="left:1033px;top:547px;width:329px;height:1px;background:#474747"></div>
<div class="t" style="left:1241px;top:554px;font-size:12px;color:#9a9a9a;--w:22;">り：</div>
<div class="a" style="left:1260px;top:553px;width:55px;height:18px;background:#4b4b4b;border:1px solid #484848;border-radius:3px"></div>
<div class="a" style="left:1262px;top:555px;width:35px;height:14px;background:#454545"></div>
<div class="t" style="left:1265px;top:554px;font-size:11px;color:#7a7a7a;--w:30;">100%</div>
<svg style="left:1302px;top:560px;" width="8" height="5" viewBox="0 0 8 5"><path d="M1 0.5L4 3.5L7 0.5" stroke="#6a6a6a" fill="none" stroke-width="1"/></svg>
<div class="a" style="left:1033px;top:575px;width:329px;height:4px;background:#3e3e3e"></div>
<div class="a" style="left:1033px;top:579px;width:311px;height:40px;background:#6b6b6b"></div>
<svg style="left:1317px;top:593px;" width="11" height="13" viewBox="0 0 11 13"><path d="M2.5 6V4A3 3 0 0 1 8.5 4V6" stroke="#f0f0f0" stroke-width="1.3" fill="none"/><rect x="1" y="6" width="9" height="6.5" stroke="#f0f0f0" stroke-width="1.1" fill="none"/><rect x="5" y="8.5" width="1.4" height="1.4" fill="#f0f0f0"/></svg>
<div class="a" style="left:1033px;top:619px;width:329px;height:244px;background:#4f4f4f"></div>
<div class="a" style="left:1033px;top:863px;width:329px;height:1px;background:#3a3a3a"></div>
<div class="a" style="left:1033px;top:864px;width:329px;height:24px;background:#535353"></div>
<svg style="left:1158px;top:871px;" width="15" height="8" viewBox="0 0 15 8"><rect x="0.7" y="0.7" width="7" height="6.5" rx="3.2" stroke="#a8a8a8" stroke-width="1.3" fill="none"/><rect x="6.5" y="0.7" width="7.5" height="6.5" rx="3.2" stroke="#a8a8a8" stroke-width="1.3" fill="none"/><path d="M4 4H11" stroke="#a8a8a8" stroke-width="1.3"/></svg>
<div class="t" style="left:1186px;top:867px;font:italic 14px/16px 'Liberation Sans',sans-serif;color:#a8a8a8">fx</div>
<svg style="left:1212px;top:870px;" width="13" height="10" viewBox="0 0 13 10"><rect width="13" height="10" fill="#a8a8a8"/><circle cx="6.5" cy="5" r="3" fill="#535353"/></svg>
<svg style="left:1240px;top:870px;" width="12" height="12" viewBox="0 0 12 12"><circle cx="6" cy="6" r="5.3" stroke="#a8a8a8" stroke-width="1.3" fill="none"/><path d="M10 2L2 10A5.3 5.3 0 0 0 10 2Z" fill="#a8a8a8"/></svg>
<svg style="left:1267px;top:869px;" width="13" height="11" viewBox="0 0 13 11"><path d="M0 2H5L6 3H13V11H0Z" fill="#a8a8a8"/><path d="M0.5 0.5H5" stroke="#a8a8a8"/></svg>
<svg style="left:1294px;top:869px;" width="12" height="12" viewBox="0 0 12 12"><rect x="0.5" y="0.5" width="11" height="11" stroke="#a8a8a8" fill="none"/><path d="M6 3V9M3 6H9" stroke="#a8a8a8" stroke-width="1.2"/></svg>
<svg style="left:1320px;top:869px;" width="12" height="13" viewBox="0 0 12 13"><path d="M0 2.5H12M4 2V0.5H8V2" stroke="#a8a8a8" stroke-width="1.2" fill="none"/><path d="M1.5 3.5V12.5H10.5V3.5M4.5 5V11M7.5 5V11" stroke="#a8a8a8" stroke-width="1.2" fill="none"/></svg>
<div class="a" style="left:1360px;top:62px;width:2px;height:826px;background:#424242"></div>
<div class="a" style="left:497px;top:375px;width:745px;height:455px;box-shadow:2px 4px 18px rgba(0,0,0,.38)"></div>
<div class="a" style="left:497px;top:375px;width:745px;height:455px;background:#535353;border:1px solid #3a3a3a"></div>
<div class="a" style="left:498px;top:376px;width:743px;height:30px;background:#ffffff"></div>
<div class="t" style="left:506px;top:382.5px;font-size:12px;color:#000000;--w:50;">トーンカーブ</div>
<svg style="left:1221px;top:385px;" width="10" height="10" viewBox="0 0 10 10"><path d="M0.5 0.5L9.5 9.5M9.5 0.5L0.5 9.5" stroke="#000" stroke-width="1.1"/></svg>
<svg style="left:793px;top:397px;" width="12" height="19" viewBox="0 0 12 19"><path d="M0.5 0.5V16L4.5 12L7.5 18.5L10 17.5L7 11H12.5Z" fill="#000" stroke="#fff" stroke-width="1"/></svg>
<div class="t" style="left:510px;top:425px;font-size:12px;color:#e0e0e0;--w:73;">プリセット (R)：</div>
<div class="a" style="left:590px;top:423px;width:290px;height:17px;background:#454545;border:1px solid #3c3c3c;border-radius:3px"></div>
<div class="t" style="left:599px;top:423.5px;font-size:12px;color:#f0f0f0;--w:39;">カスタム</div>
<svg style="left:868px;top:429px;" width="9" height="6" viewBox="0 0 9 6"><path d="M1 1L4.5 4.5L8 1" stroke="#c8c8c8" fill="none" stroke-width="1.1"/></svg>
<svg style="left:896px;top:427px;" width="16" height="13" viewBox="0 0 16 13"><g transform="translate(6 6.5)" fill="#dcdcdc"><circle r="4"/><rect x="-1.3" y="-6" width="2.6" height="3" transform="rotate(0)"/><rect x="-1.3" y="-6" width="2.6" height="3" transform="rotate(45)"/><rect x="-1.3" y="-6" width="2.6" height="3" transform="rotate(90)"/><rect x="-1.3" y="-6" width="2.6" height="3" transform="rotate(135)"/><rect x="-1.3" y="-6" width="2.6" height="3" transform="rotate(180)"/><rect x="-1.3" y="-6" width="2.6" height="3" transform="rotate(225)"/><rect x="-1.3" y="-6" width="2.6" height="3" transform="rotate(270)"/><rect x="-1.3" y="-6" width="2.6" height="3" transform="rotate(315)"/><circle r="1.6" fill="#535353"/></g><path d="M11.5 10.5H15L13.25 12.2Z" fill="#dcdcdc"/></svg>
<div class="a" style="left:509px;top:462px;width:406px;height:355px;border:1px solid #3c3c3c"></div>
<div class="a" style="left:524px;top:455px;width:219px;height:14px;background:#535353"></div>
<div class="t" style="left:557px;top:457px;font-size:12px;color:#e8e8e8;--w:58;">チャンネル：</div>
<div class="a" style="left:622px;top:454px;width:115px;height:22px;background:#454545;border:1px solid #3c3c3c;border-radius:3px"></div>
<div class="t" style="left:632px;top:457.5px;font-size:12px;color:#f0f0f0;--w:22;">RGB</div>
<svg style="left:724px;top:463px;" width="9" height="6" viewBox="0 0 9 6"><path d="M1 1L4.5 4.5L8 1" stroke="#c8c8c8" fill="none" stroke-width="1.1"/></svg>
<div class="a" style="left:519px;top:485px;width:28px;height:24px;background:#383838;border:1px solid #4a4a4a;border-radius:4px"></div>
<svg style="left:522px;top:492px;" width="20" height="10" viewBox="0 0 20 10"><path d="M2 8C4 3 6 1 8 1.5C10 2 11 8 13 8C15 8 16.5 3 17.5 1.5" stroke="#d0d0d0" stroke-width="1.1" fill="none"/><circle cx="2" cy="8" r="1.2" fill="#e8e8e8"/><circle cx="8" cy="1.5" r="1.2" fill="#e8e8e8"/><circle cx="13" cy="8" r="1.2" fill="#e8e8e8"/><circle cx="17.5" cy="1.5" r="1.2" fill="#e8e8e8"/></svg>
<svg style="left:554px;top:488px;" width="17" height="17" viewBox="0 0 17 17"><path d="M13.5 1.5L15.5 3.5L5 14L1.5 15.5L3 12Z" stroke="#c8c8c8" stroke-width="1.1" fill="#6a6a6a"/><path d="M12 3L14 5" stroke="#c8c8c8" stroke-width="2"/></svg>
<div class="a" style="left:587px;top:484px;width:11px;height:256px;background:linear-gradient(to bottom,#ffffff,#000000)"></div>
<div class="a" style="left:601px;top:484px;width:258px;height:258px;background:#444444;border:2px solid #353535"></div>
<svg style="left:601px;top:484px;overflow:hidden" width="258" height="258" viewBox="0 0 258 258"><path d="M129.0 259.4 L144.2 257.9 L153.3 253.3 L157.8 239.7 L160.3 194.2 L163.3 163.8 L166.3 132.0 L171.5 69.8 L175.1 24.3 L177.9 7.6 L179.7 5.5 L181.5 7.6 L183.9 24.3 L185.7 69.8 L188.2 132.0 L190.6 182.0 L192.7 212.4 L195.8 242.7 L200.3 256.4 L207.9 259.4Z" fill="#7c7c7c"/><g shape-rendering="crispEdges"><path d="M66 2V256" stroke="#383838" stroke-width="1.2"/><path d="M128 2V256" stroke="#383838" stroke-width="1.2"/><path d="M191 2V256" stroke="#383838" stroke-width="1.2"/><path d="M2 66H256" stroke="#383838" stroke-width="1.2"/><path d="M2 128H256" stroke="#383838" stroke-width="1.2"/><path d="M2 190H256" stroke="#383838" stroke-width="1.2"/></g><path d="M2 256L256 2" stroke="#2f2f2f" stroke-width="1"/><path d="M122 2V256M2 152H256" stroke="#777777" stroke-width="1.6" shape-rendering="crispEdges"/><polyline points="604.5,738.7 608.5,736.6 612.4,734.4 616.4,732.3 620.3,730.1 624.2,727.9 628.2,725.6 632.1,723.3 636.1,721.0 640.0,718.5 644.0,716.0 648.0,713.4 651.9,710.7 655.9,707.9 659.8,705.0 663.8,702.0 667.7,698.8 671.6,695.5 675.6,692.0 679.5,688.4 683.5,684.7 687.5,680.7 691.4,676.6 695.4,672.3 699.3,667.8 703.2,663.0 707.2,658.1 711.1,652.9 715.1,647.5 719.0,641.9 723.0,636.0 725.8,631.6 728.6,627.2 731.5,622.6 734.3,617.9 737.1,613.1 739.9,608.3 742.7,603.4 745.5,598.5 748.4,593.6 751.2,588.6 754.0,583.6 756.8,578.6 759.6,573.7 762.4,568.8 765.2,563.9 768.1,559.1 770.9,554.4 773.7,549.7 776.5,545.2 779.3,540.8 782.1,536.4 785.0,532.3 787.8,528.2 790.6,524.4 793.4,520.7 796.2,517.2 799.0,513.9 801.9,510.8 804.7,507.9 807.5,505.3 809.1,503.9 810.7,502.6 812.2,501.4 813.8,500.3 815.4,499.2 817.0,498.2 818.6,497.3 820.2,496.4 821.8,495.6 823.3,494.8 824.9,494.1 826.5,493.4 828.1,492.8 829.7,492.2 831.2,491.7 832.8,491.2 834.4,490.7 836.0,490.3 837.6,489.9 839.2,489.6 840.8,489.2 842.3,488.9 843.9,488.6 845.5,488.4 847.1,488.1 848.7,487.9 850.2,487.6 851.8,487.4 853.4,487.2 855.0,487.0" transform="translate(-601 -484)" stroke="#f4f4f4" stroke-width="1.3" fill="none"/><rect x="0.5" y="251.7" width="6" height="6" fill="#444" stroke="#fff" stroke-width="1.5"/><rect x="203.5" y="18.3" width="6" height="6" fill="#444" stroke="#fff" stroke-width="1.5"/><rect x="251.0" y="0.0" width="6" height="6" fill="#444" stroke="#fff" stroke-width="1.5"/><rect x="118.5" y="148.5" width="7" height="7" fill="#fff"/></svg>
<div class="a" style="left:599px;top:742px;width:256px;height:11px;background:linear-gradient(to right,#000000,#ffffff)"></div>
<svg style="left:595px;top:754px;" width="12" height="12" viewBox="0 0 12 12"><path d="M6 0.8L10.8 6.5V9.5A1.5 1.5 0 0 1 9.3 11H2.7A1.5 1.5 0 0 1 1.2 9.5V6.5Z" fill="#535353" stroke="#222" stroke-width="1.2"/></svg>
<svg style="left:847px;top:754px;" width="12" height="12" viewBox="0 0 12 12"><path d="M6 0.8L10.8 6.5V9.5A1.5 1.5 0 0 1 9.3 11H2.7A1.5 1.5 0 0 1 1.2 9.5V6.5Z" fill="#e6e6e6" stroke="#222" stroke-width="1.2"/></svg>
<div class="t" style="left:519px;top:704.5px;font-size:12px;color:#e0e0e0;--w:55;">出力(O)：</div>
<div class="a" style="left:518px;top:719px;width:69px;height:22px;background:#454545;border:1px solid #3c3c3c"></div>
<div class="t" style="left:523px;top:722.5px;font-size:12px;color:#f4f4f4;--w:23;">104</div>
<div class="t" style="left:602px;top:767px;font-size:12px;color:#e0e0e0;--w:50;">入力(I)：</div>
<div class="a" style="left:601px;top:783px;width:69px;height:22px;background:#454545;border:1px solid #3c3c3c"></div>
<div class="t" style="left:605px;top:786px;font-size:12px;color:#f4f4f4;--w:22;">121</div>
<svg style="left:522px;top:790px;" width="20" height="15" viewBox="0 0 20 15"><path d="M1 4.6H6L3.5 1.6Z M1 11.2H6L3.5 14.2Z" fill="#e0e0e0"/><path d="M9.5 0.4C10.5 0.2 12 0 13.5 0.3C17 1 18.8 3.5 18.5 6.8C18.2 9.8 15.5 12 13 13.5H11L13.5 9H4.3C3.8 8.7 3.8 7.6 4.3 7.2H10.5V6.4H8.8V5.2H10.2V4H8.4V2.9H10V1.9H8.6V1H9.8Z" fill="#e0e0e0"/></svg>
<svg style="left:684px;top:787px;" width="17" height="17" viewBox="0 0 17 17"><g transform="translate(8.5 8.5) rotate(45) scale(0.95) translate(0 -10)"><rect x="-2.3" y="0" width="4.6" height="6" rx="2.3" fill="#e4e4e4"/><rect x="-3.8" y="5" width="7.6" height="2.6" rx="0.8" fill="#e4e4e4"/><path d="M-1.9 7.6V17.5A1.9 1.9 0 0 0 1.9 17.5V7.6" stroke="#e4e4e4" stroke-width="1.3" fill="#535353"/><path d="M-1.3 13.5V17.5A1.3 1.3 0 0 0 1.3 17.5V13.5Z" fill="#111111"/><rect x="-4.2" y="5" width="8.4" height="3" rx="0.8" fill="#e4e4e4"/></g></svg>
<svg style="left:714px;top:787px;" width="17" height="17" viewBox="0 0 17 17"><g transform="translate(8.5 8.5) rotate(45) scale(0.95) translate(0 -10)"><rect x="-2.3" y="0" width="4.6" height="6" rx="2.3" fill="#e4e4e4"/><rect x="-3.8" y="5" width="7.6" height="2.6" rx="0.8" fill="#e4e4e4"/><path d="M-1.9 7.6V17.5A1.9 1.9 0 0 0 1.9 17.5V7.6" stroke="#e4e4e4" stroke-width="1.3" fill="#535353"/><path d="M-1.3 13.5V17.5A1.3 1.3 0 0 0 1.3 17.5V13.5Z" fill="#888888"/><rect x="-4.2" y="5" width="8.4" height="3" rx="0.8" fill="#e4e4e4"/></g></svg>
<svg style="left:744px;top:787px;" width="17" height="17" viewBox="0 0 17 17"><g transform="translate(8.5 8.5) rotate(45) scale(0.95) translate(0 -10)"><rect x="-2.3" y="0" width="4.6" height="6" rx="2.3" fill="#e4e4e4"/><rect x="-3.8" y="5" width="7.6" height="2.6" rx="0.8" fill="#e4e4e4"/><path d="M-1.9 7.6V17.5A1.9 1.9 0 0 0 1.9 17.5V7.6" stroke="#e4e4e4" stroke-width="1.3" fill="#535353"/><path d="M-1.3 13.5V17.5A1.3 1.3 0 0 0 1.3 17.5V13.5Z" fill="#f8f8f8"/><rect x="-4.2" y="5" width="8.4" height="3" rx="0.8" fill="#e4e4e4"/></g></svg>
<div class="a" style="left:776px;top:788px;width:12px;height:12px;border:1px solid #7a7a7a;border-radius:2px;background:#4a4a4a"></div>
<div class="t" style="left:795px;top:786px;font-size:12px;color:#e0e0e0;--w:92;">クリップを表示(W)</div>
<div class="a" style="left:932px;top:423px;width:173px;height:76px;border:1px solid #3c3c3c"></div>
<div class="a" style="left:942px;top:415px;width:90px;height:14px;background:#535353"></div>
<div class="t" style="left:952px;top:416px;font-size:12px;color:#e0e0e0;--w:76;">グラフ軸の単位：</div>
<svg style="left:942px;top:441px;" width="13" height="13" viewBox="0 0 13 13"><circle cx="6.5" cy="6.5" r="6" fill="#d8d8d8"/><circle cx="6.5" cy="6.5" r="2.5" fill="#222"/></svg>
<div class="t" style="left:961px;top:439.5px;font-size:12px;color:#e8e8e8;--w:86;">光量 (0-255)(L)</div>
<svg style="left:942px;top:473px;" width="13" height="13" viewBox="0 0 13 13"><circle cx="6.5" cy="6.5" r="5.8" fill="#4a4a4a" stroke="#6a6a6a" stroke-width="1"/></svg>
<div class="t" style="left:961px;top:472px;font-size:12px;color:#e8e8e8;--w:114;">色材量 (0-100%)(G)</div>
<div class="a" style="left:932px;top:522px;width:173px;height:56px;border:1px solid #3c3c3c"></div>
<div class="a" style="left:942px;top:514px;width:87px;height:14px;background:#535353"></div>
<div class="t" style="left:952px;top:515px;font-size:12px;color:#e0e0e0;--w:73;">グリッドサイズ：</div>
<div class="a" style="left:942px;top:543px;width:25px;height:25px;background:#383838;border:1px solid #4a4a4a;border-radius:3px"></div>
<svg style="left:947px;top:548px;" width="14" height="14" viewBox="0 0 14 14"><rect x="0.5" y="0.5" width="13" height="13" stroke="#e8e8e8" fill="none"/><path d="M7 0.5V13.5M0.5 7H13.5" stroke="#e8e8e8"/></svg>
<svg style="left:973px;top:548px;" width="14" height="14" viewBox="0 0 14 14"><rect x="0.5" y="0.5" width="13" height="13" stroke="#c8c8c8" fill="none"/><path d="M3.75 0.5V13.5M7 0.5V13.5M10.25 0.5V13.5M0.5 3.75H13.5M0.5 7H13.5M0.5 10.25H13.5" stroke="#c8c8c8" stroke-width="0.9"/></svg>
<div class="a" style="left:932px;top:601px;width:173px;height:122px;border:1px solid #3c3c3c"></div>
<div class="a" style="left:942px;top:593px;width:44px;height:14px;background:#535353"></div>
<div class="t" style="left:952px;top:594px;font-size:12px;color:#e0e0e0;--w:30;">表示：</div>
<div class="a" style="left:941px;top:618px;width:13px;height:13px;background:#dcdcdc;border-radius:2px"></div>
<svg style="left:943px;top:620px;" width="9" height="8" viewBox="0 0 9 8"><path d="M1 4L3.5 6.5L8 1.5" stroke="#222" stroke-width="1.8" fill="none"/></svg>
<div class="t" style="left:961px;top:616px;font-size:12px;color:#e8e8e8;--w:109;">全チャンネル表示(V)</div>
<div class="a" style="left:941px;top:645px;width:13px;height:13px;background:#dcdcdc;border-radius:2px"></div>
<svg style="left:943px;top:647px;" width="9" height="8" viewBox="0 0 9 8"><path d="M1 4L3.5 6.5L8 1.5" stroke="#222" stroke-width="1.8" fill="none"/></svg>
<div class="t" style="left:961px;top:643px;font-size:12px;color:#e8e8e8;--w:77;">ヒストグラム(H)</div>
<div class="a" style="left:941px;top:671px;width:13px;height:13px;background:#dcdcdc;border-radius:2px"></div>
<svg style="left:943px;top:673px;" width="9" height="8" viewBox="0 0 9 8"><path d="M1 4L3.5 6.5L8 1.5" stroke="#222" stroke-width="1.8" fill="none"/></svg>
<div class="t" style="left:961px;top:669px;font-size:12px;color:#e8e8e8;--w:57;">基準線(B)</div>
<div class="a" style="left:941px;top:698px;width:13px;height:13px;background:#dcdcdc;border-radius:2px"></div>
<svg style="left:943px;top:700px;" width="9" height="8" viewBox="0 0 9 8"><path d="M1 4L3.5 6.5L8 1.5" stroke="#222" stroke-width="1.8" fill="none"/></svg>
<div class="t" style="left:961px;top:696px;font-size:12px;color:#e8e8e8;--w:57;">交差線(N)</div>
<div class="a" style="left:1121px;top:422px;width:109px;height:26px;border:2px solid #d0d0d0;border-radius:13px"></div>
<div class="t" style="left:1166.5px;top:427px;font-size:12px;color:#f4f4f4;--w:17;">OK</div>
<div class="a" style="left:1121px;top:456px;width:109px;height:26px;border:1px solid #858585;border-radius:13px"></div>
<div class="t" style="left:1148.0px;top:461px;font-size:12px;color:#f0f0f0;--w:54;">キャンセル</div>
<div class="a" style="left:1121px;top:497px;width:109px;height:26px;border:1px solid #5e5e5e;border-radius:13px"></div>
<div class="t" style="left:1144.0px;top:502px;font-size:12px;color:#808080;--w:62;">滑らかに(M)</div>
<div class="a" style="left:1121px;top:539px;width:109px;height:26px;border:1px solid #858585;border-radius:13px"></div>
<div class="t" style="left:1140.0px;top:544px;font-size:12px;color:#f0f0f0;--w:70;">自動補正(A)</div>
<div class="a" style="left:1121px;top:573px;width:109px;height:26px;border:1px solid #858585;border-radius:13px"></div>
<div class="t" style="left:1136.5px;top:578px;font-size:12px;color:#f0f0f0;--w:77;">オプション(T)...</div>
<div class="a" style="left:1120px;top:618px;width:13px;height:13px;background:#dcdcdc;border-radius:2px"></div>
<svg style="left:1122px;top:620px;" width="9" height="8" viewBox="0 0 9 8"><path d="M1 4L3.5 6.5L8 1.5" stroke="#222" stroke-width="1.8" fill="none"/></svg>
<div class="t" style="left:1139px;top:616px;font-size:12px;color:#e8e8e8;--w:66;">プレビュー(P)</div>
<script>
(function(){
function fit(){var els=document.querySelectorAll('.t');for(var i=0;i<els.length;i++){var e=els[i];var w=parseFloat(getComputedStyle(e).getPropertyValue('--w'));if(w){e.style.transform='none';var r=e.getBoundingClientRect().width;if(r>0){e.style.transform='scaleX('+(w/r)+')';}}}}
fit();
window.addEventListener('load',fit);
if(document.fonts&&document.fonts.ready){document.fonts.ready.then(fit);}
})();
</script></body></html>
